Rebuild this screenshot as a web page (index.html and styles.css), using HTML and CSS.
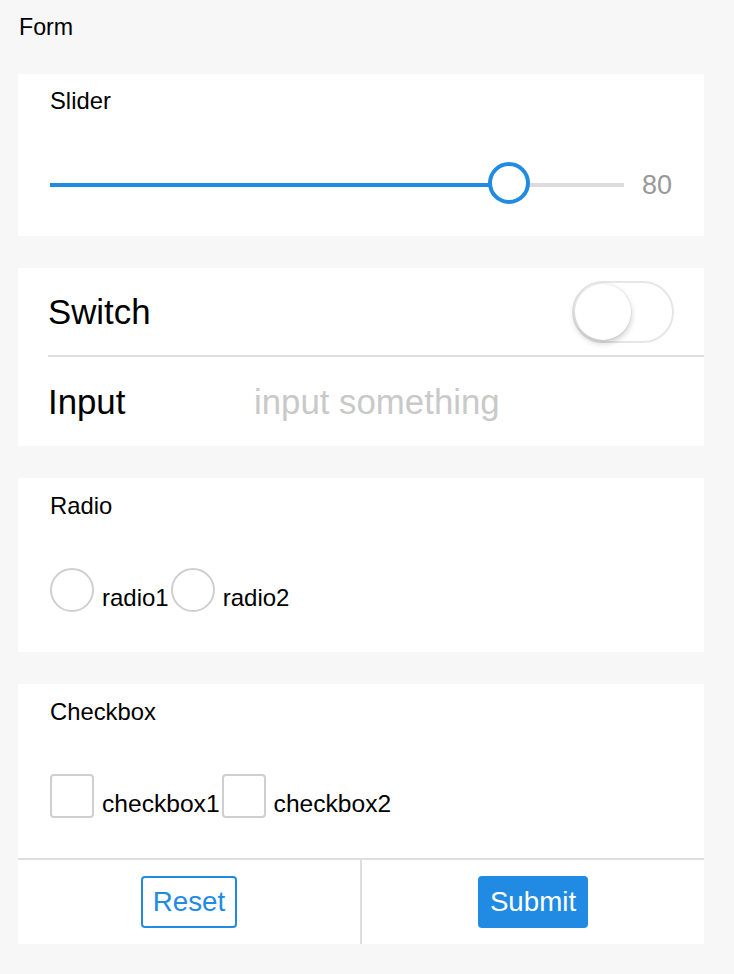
FILE: index.html
```html
<!DOCTYPE html>
<html>
<head>
<meta charset="utf-8">
<title>Form</title>
<link rel="stylesheet" href="styles.css">
</head>
<body>
<div class="page">
  <div class="page-title">Form</div>

  <section class="card card-slider">
    <div class="card-label">Slider</div>
    <div class="slider-row">
      <div class="slider">
        <div class="track"></div>
        <div class="fill" style="width: 80%"></div>
        <div class="thumb" style="left: 80%"></div>
      </div>
      <span class="slider-value">80</span>
    </div>
  </section>

  <section class="card card-list">
    <div class="list-row switch-row">
      <span class="row-label">Switch</span>
      <span class="switch"><span class="knob"></span></span>
    </div>
    <div class="list-row input-row">
      <span class="row-label input-label">Input</span>
      <input class="text-input" type="text" placeholder="input something">
    </div>
  </section>

  <section class="card card-choice">
    <div class="card-label">Radio</div>
    <div class="choices">
      <label class="choice"><span class="radio"></span><span class="choice-text">radio1</span></label>
      <label class="choice"><span class="radio"></span><span class="choice-text">radio2</span></label>
    </div>
  </section>

  <section class="card card-checkbox">
    <div class="checkbox-body">
      <div class="card-label">Checkbox</div>
      <div class="choices">
        <label class="choice"><span class="checkbox"></span><span class="choice-text checkbox-text">checkbox1</span></label>
        <label class="choice"><span class="checkbox"></span><span class="choice-text checkbox-text">checkbox2</span></label>
      </div>
    </div>
    <div class="actions">
      <div class="action-cell"><button class="btn btn-ghost" type="button">Reset</button></div>
      <div class="action-cell"><button class="btn btn-primary" type="button">Submit</button></div>
    </div>
  </section>
</div>
</body>
</html>
```

FILE: styles.css
```css
* {
  box-sizing: border-box;
}

html, body {
  margin: 0;
  padding: 0;
  background: #f7f7f7;
}

body {
  font-family: "Liberation Sans", Arial, sans-serif;
  color: #000;
}

.page {
  padding: 13px 30px 30px 18px;
  display: flex;
  flex-direction: column;
}

.page-title {
  font-size: 23.2px;
  line-height: 28px;
  padding-left: 1px;
  margin-bottom: 33px;
}

.card {
  background: #fff;
  margin-bottom: 32px;
}

.card-label {
  font-size: 23.8px;
  line-height: 28px;
}

/* Slider */
.card-slider {
  padding: 13px 32px 30px 32px;
}

.card-slider .card-label {
  margin-bottom: 47px;
}

.slider-row {
  display: flex;
  align-items: center;
  height: 44px;
}

.slider {
  position: relative;
  flex: 1;
  height: 44px;
  margin-right: 18px;
}

.track {
  position: absolute;
  left: 0;
  right: 0;
  top: 21px;
  height: 4px;
  background: #dcdcdc;
}

.fill {
  position: absolute;
  left: 0;
  top: 21px;
  height: 4px;
  background: #218be3;
}

.thumb {
  position: absolute;
  top: 0;
  width: 42px;
  height: 42px;
  margin-left: -21px;
  border: 4px solid #218be3;
  border-radius: 50%;
  background: #fff;
}

.slider-value {
  font-size: 27px;
  color: #999;
  line-height: 32px;
  padding-top: 2px;
}

/* List */
.list-row {
  display: flex;
  align-items: center;
  margin-left: 30px;
}

.switch-row {
  height: 89px;
  border-bottom: 2px solid #dedede;
  justify-content: space-between;
  padding-right: 30px;
}

.input-row {
  height: 89px;
}

.row-label {
  font-size: 34.8px;
  line-height: 40px;
}

.input-label {
  width: 206px;
  flex: none;
}

.text-input {
  flex: 1;
  min-width: 0;
  border: none;
  outline: none;
  padding: 0;
  font-family: "Liberation Sans", Arial, sans-serif;
  font-size: 34.8px;
  line-height: 40px;
  height: 40px;
  background: transparent;
  color: #000;
}

.text-input::placeholder {
  color: #c9c9c9;
}

.switch {
  display: flex;
  align-items: center;
  width: 102px;
  height: 62px;
  border: 2px solid #e6e6e6;
  border-radius: 31px;
  background: #fff;
  padding: 0 1px;
}

.knob {
  width: 56px;
  height: 56px;
  border-radius: 50%;
  background: #fff;
  box-shadow: 0 3px 6px rgba(0, 0, 0, 0.22), 0 0 0 1px rgba(0, 0, 0, 0.04);
}

/* Choices */
.card-choice {
  padding: 14px 32px 40px 32px;
}

.checkbox-body {
  padding: 14px 32px 40px 32px;
}

.card-choice .card-label,
.checkbox-body .card-label {
  margin-bottom: 48px;
}

.choices {
  display: flex;
  gap: 2px;
}

.choice {
  display: flex;
  align-items: flex-end;
}

.radio {
  width: 44px;
  height: 44px;
  border: 2px solid #cfcfcf;
  border-radius: 50%;
  flex: none;
}

.checkbox {
  width: 44px;
  height: 44px;
  border: 2px solid #cfcfcf;
  border-radius: 4px;
  flex: none;
}

.choice-text {
  margin-left: 8px;
  margin-bottom: 2px;
  font-size: 24px;
  line-height: 24px;
}

.checkbox-text {
  font-size: 24.6px;
}

/* Actions */
.card-checkbox {
  margin-bottom: 0;
}

.actions {
  display: flex;
  border-top: 2px solid #dedede;
  height: 86px;
}

.action-cell {
  flex: 1;
  display: flex;
  align-items: center;
  justify-content: center;
}

.action-cell + .action-cell {
  border-left: 2px solid #dedede;
}

.btn {
  font-family: "Liberation Sans", Arial, sans-serif;
  font-size: 27.7px;
  height: 52px;
  padding: 0 10px;
  border-radius: 4px;
  border: 2px solid #218be3;
  line-height: 48px;
  cursor: pointer;
}

.btn-ghost {
  background: #fff;
  color: #218be3;
}

.btn-primary {
  background: #218be3;
  color: #fff;
}
```
